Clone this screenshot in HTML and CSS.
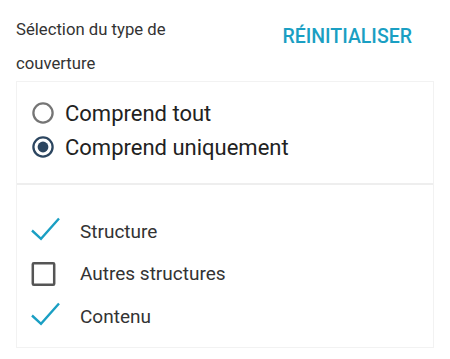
FILE: index.html
```html
<!DOCTYPE html>
<html lang="fr">
<head>
  <meta charset="UTF-8">
  <meta name="viewport" content="width=device-width, initial-scale=1.0">
  <title>Type de couverture</title>
  <link rel="stylesheet" href="styles.css">
</head>
<body>
  <div class="panel">
    <div class="panel-head">
      <h2 class="panel-title">Sélection du type de couverture</h2>
      <button class="reset">RÉINITIALISER</button>
    </div>

    <div class="box">
      <div class="radios">
        <label class="radio">
          <svg class="radio-icon" width="24" height="24" viewBox="0 0 24 24">
            <circle cx="12" cy="12" r="9.6" fill="none" stroke="#757575" stroke-width="2.3"/>
          </svg>
          <span>Comprend tout</span>
        </label>
        <label class="radio">
          <svg class="radio-icon" width="24" height="24" viewBox="0 0 24 24">
            <circle cx="12" cy="12" r="9.6" fill="none" stroke="#2c4660" stroke-width="2.3"/>
            <circle cx="12" cy="12" r="5.4" fill="#2c4660"/>
          </svg>
          <span>Comprend uniquement</span>
        </label>
      </div>

      <ul class="checks">
        <li class="check">
          <svg class="check-icon" width="30" height="30" viewBox="0 0 30 30">
            <path d="M1 14.5 L10 22.8 L28 2.5" fill="none" stroke="#1a9fc3" stroke-width="2.4"/>
          </svg>
          <span>Structure</span>
        </li>
        <li class="check">
          <svg class="check-icon" width="30" height="30" viewBox="0 0 30 30">
            <rect x="1.8" y="4.2" width="21.4" height="21.6" rx="1" fill="none" stroke="#555" stroke-width="2.5"/>
          </svg>
          <span>Autres structures</span>
        </li>
        <li class="check">
          <svg class="check-icon" width="30" height="30" viewBox="0 0 30 30">
            <path d="M1 14.5 L10 22.8 L28 2.5" fill="none" stroke="#1a9fc3" stroke-width="2.4"/>
          </svg>
          <span>Contenu</span>
        </li>
      </ul>
    </div>
  </div>
</body>
</html>
```

FILE: styles.css
```css
body {
  margin: 0;
  background: #fff;
  font-family: Roboto, 'Liberation Sans', sans-serif;
  color: #333;
}
.panel {
  padding: 13px 16px 0;
  width: 418px;
}
.panel-head {
  display: flex;
  justify-content: space-between;
  align-items: flex-start;
}
.panel-title {
  margin: 0;
  width: 180px;
  font-size: 16.7px;
  font-weight: 400;
  line-height: 34px;
  color: #333;
}
.reset {
  margin: 13px 22px 0 0;
  padding: 0;
  border: 0;
  background: none;
  font-family: inherit;
  font-size: 19.5px;
  font-weight: 500;
  line-height: 22px;
  color: #1a9fc3;
}
.box {
  border: 1px solid #f2f2f2;
  height: 265px;
}
.radios {
  padding: 14px 0 19px 14px;
  border-bottom: 2px solid #eeeeee;
}
.radio {
  display: flex;
  align-items: center;
  height: 34px;
  font-size: 22px;
  color: #222;
}
.radio-icon {
  margin-right: 10px;
}
.checks {
  list-style: none;
  margin: 0;
  padding: 25px 0 0 14px;
}
.check {
  display: flex;
  align-items: center;
  height: 42.5px;
  font-size: 19px;
  color: #333;
}
.check-icon {
  margin-right: 19px;
}
```
